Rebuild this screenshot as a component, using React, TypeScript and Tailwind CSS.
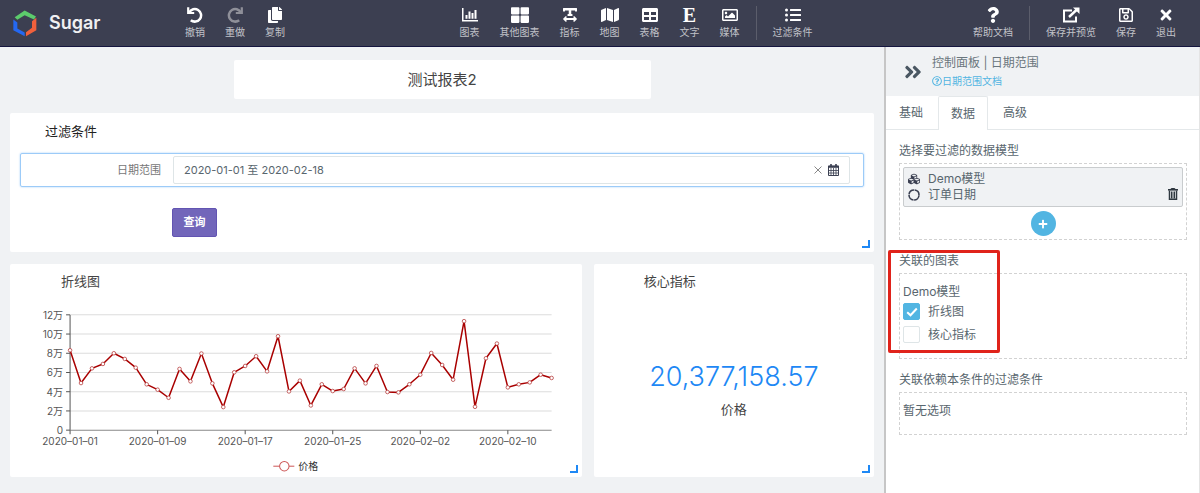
import React, { useState } from 'react';
import {
  FaAngleDoubleRight,
  FaCopy,
  FaCubes,
  FaListUl,
  FaMap,
  FaPlus,
  FaQuestion,
  FaRegImage,
  FaRegQuestionCircle,
  FaRegSave,
  FaTable,
  FaTextWidth,
  FaThLarge,
  FaTimes,
} from 'react-icons/fa';

// prices per day, in units of 10,000
const prices = [
  8.31, 4.9, 6.43, 6.89, 8.0, 7.41, 6.5, 4.77, 4.21, 3.37, 6.37, 5.08, 7.97, 4.87, 2.4, 6.02, 6.68,
  7.69, 6.12, 9.77, 4.03, 5.15, 2.57, 4.77, 4.07, 4.28, 6.43, 4.87, 6.68, 3.97, 3.93, 4.77, 5.77,
  8.03, 6.78, 5.25, 11.34, 2.43, 7.48, 9.01, 4.45, 4.77, 4.97, 5.77, 5.43,
];

const dates = [
  '2020-01-01',
  '2020-01-09',
  '2020-01-17',
  '2020-01-25',
  '2020-02-02',
  '2020-02-10',
];

function Logo() {
  return (
    <svg viewBox="40 28 72 80" className="w-6 h-[27px]" aria-hidden="true">
      <path d="M45 49L75 29L109 47L103 56L75 43L53 57Z" fill="#5ccb6c" />
      <path d="M41 56L53 65V83L75 95V106L41 88Z" fill="#2468f2" />
      <path d="M110 51V88L79 106V94L97 81V61Z" fill="#f0603c" />
    </svg>
  );
}

function UndoIcon() {
  return (
    <svg viewBox="0 0 16 16" className="w-4 h-4" fill="none" stroke="currentColor" aria-hidden="true">
      <path d="M1.2 0.3V6H7.2" strokeWidth="2.2" />
      <path d="M2.2 5.4A6.3 6.3 0 1 1 3.8 13.2" strokeWidth="2.5" />
    </svg>
  );
}

function RedoIcon() {
  return (
    <svg viewBox="0 0 16 16" className="w-4 h-4" fill="none" stroke="currentColor" aria-hidden="true">
      <path d="M14.8 0.3V6H8.8" strokeWidth="2.2" />
      <path d="M13.8 5.4A6.3 6.3 0 1 0 12.2 13.2" strokeWidth="2.5" />
    </svg>
  );
}

function ChartIcon() {
  return (
    <svg viewBox="0 0 16 14" className="w-4 h-[14px]" fill="currentColor" aria-hidden="true">
      <path d="M0 0H1.5V12H16V13.5H0ZM3.5 7H5.5V10.7H3.5ZM6.5 3.5H8.5V10.7H6.5ZM9.5 5H11.5V10.7H9.5ZM12.5 2H14.5V10.7H12.5Z" />
    </svg>
  );
}

function ExternalIcon() {
  return (
    <svg viewBox="0 0 18 16" className="w-[18px] h-4" fill="none" stroke="currentColor" strokeWidth="2" aria-hidden="true">
      <path d="M10 3.5H2V14.5H14V9.5" />
      <path d="M7 10L15 2.5" strokeWidth="2.4" />
      <path d="M11 0.5H17.5V7Z" fill="currentColor" stroke="none" />
    </svg>
  );
}

function CalendarIcon() {
  return (
    <svg viewBox="0 0 11 12" className="w-[11px] h-3" fill="none" stroke="currentColor" aria-hidden="true">
      <path d="M0.5 2H10.5V11.5H0.5Z" />
      <path d="M0 2.8H11" strokeWidth="2" />
      <path d="M3 0V3M8 0V3" strokeWidth="1.6" />
      <path d="M3 4V11M5.5 4V11M8 4V11M1 6.5H10M1 9H10" strokeWidth="0.8" />
    </svg>
  );
}

function TrashIcon() {
  return (
    <svg viewBox="0 0 10 12" className="w-[10px] h-3" fill="none" stroke="currentColor" aria-hidden="true">
      <path d="M0 1.8H10" strokeWidth="1.6" />
      <path d="M3.2 1.5V0.5H6.8V1.5" />
      <path d="M1.5 2.5V11.2H8.5V2.5" strokeWidth="1.5" />
      <path d="M3.5 3.5V10.5M5 3.5V10.5M6.5 3.5V10.5" strokeWidth="1" />
    </svg>
  );
}

function RingIcon() {
  return (
    <svg viewBox="0 0 12 12" className="w-3 h-3" fill="none" stroke="currentColor" strokeWidth="1.6" aria-hidden="true">
      <circle cx="6" cy="6" r="5" strokeDasharray="7.25 0.6" strokeDashoffset="-0.3" />
    </svg>
  );
}

interface ToolProps {
  label: string;
  dim?: boolean;
  children: React.ReactNode;
}

function Tool({ label, dim, children }: ToolProps) {
  return (
    <button className="flex flex-col items-center px-[10px] pt-px whitespace-nowrap">
      <span className={dim ? 'flex items-center h-4 text-base text-[#8f9099]' : 'flex items-center h-4 text-base text-white'}>
        {children}
      </span>
      <span className="mt-px text-[10px] leading-4 text-[#c1c2c8]">{label}</span>
    </button>
  );
}

function Divider() {
  return <div className="w-px h-[34px] mx-[6px] bg-[#5b5d6b]" />;
}

function ResizeHandle() {
  return <div className="absolute right-1 bottom-1 w-2 h-2 border-r-2 border-b-2 border-[#1e88f5]" />;
}

function LineChart() {
  const px = (i: number) => 60 + (i * 481) / 44;
  const py = (v: number) => 133 - v * 9.6;

  return (
    <svg viewBox="0 0 571 180" className="block w-full" role="img" aria-label="折线图">
      {[2, 4, 6, 8, 10, 12].map((v) => (
        <line key={v} x1="60" x2="541" y1={py(v)} y2={py(v)} stroke="#dcdcdc" />
      ))}
      {[0, 2, 4, 6, 8, 10, 12].map((v) => (
        <g key={v}>
          <line x1="56" x2="60" y1={py(v)} y2={py(v)} stroke="#555" />
          <text x="53" y={py(v) + 4} textAnchor="end" fontSize="10" fill="#555">
            {v === 0 ? '0' : `${v}万`}
          </text>
        </g>
      ))}
      <line x1="60" x2="60" y1="18" y2="133" stroke="#555" />
      <line x1="60" x2="541" y1="133" y2="133" stroke="#888" />
      {dates.map((date, i) => (
        <g key={date}>
          <line x1={px(i * 8)} x2={px(i * 8)} y1="133" y2="137" stroke="#555" />
          <text x={px(i * 8)} y="148" textAnchor="middle" fontSize="10" fill="#555">
            {date.replace(/-/g, '–')}
          </text>
        </g>
      ))}
      <polyline
        points={prices.map((v, i) => `${px(i)},${py(v)}`).join(' ')}
        fill="none"
        stroke="#a90000"
        strokeWidth="1.5"
        strokeLinejoin="bevel"
      />
      {prices.map((v, i) => (
        <circle key={i} cx={px(i)} cy={py(v)} r="1.8" fill="#fff" stroke="#b84040" strokeWidth="0.8" />
      ))}
      <line x1="263" x2="284" y1="169" y2="169" stroke="#c55" />
      <circle cx="274" cy="169" r="4.7" fill="#fff" stroke="#c55" />
      <text x="288" y="173" fontSize="10" fill="#333">
        价格
      </text>
    </svg>
  );
}

interface CheckProps {
  label: string;
  checked: boolean;
  onChange: (checked: boolean) => void;
}

function Check({ label, checked, onChange }: CheckProps) {
  return (
    <label className="flex items-center gap-2 h-[23px]">
      <span className="grid place-items-center">
        <input
          type="checkbox"
          checked={checked}
          onChange={(e) => onChange(e.target.checked)}
          className="col-start-1 row-start-1 appearance-none w-[17px] h-[17px] bg-white border border-[#dee5e7] rounded-xs checked:bg-[#52b5e2] checked:border-[#52b5e2]"
        />
        {checked && (
          <svg viewBox="0 0 12 10" className="col-start-1 row-start-1 w-3 h-[10px] pointer-events-none" fill="none" stroke="#fff" strokeWidth="2">
            <path d="M1.2 5.2L4.5 8.3L10.8 1.5" />
          </svg>
        )}
      </span>
      {label}
    </label>
  );
}

export default function App() {
  const [tab, setTab] = useState('数据');
  const [range, setRange] = useState('2020-01-01 至 2020-02-18');
  const [lineLinked, setLineLinked] = useState(true);
  const [metricLinked, setMetricLinked] = useState(false);

  return (
    <div className="flex flex-col min-h-screen bg-[#f0f2f4] text-xs text-[#58666e] font-[Inter,'Noto_Sans_CJK_SC',sans-serif]">
      <header className="flex items-center h-[47px] pr-[14px] bg-[#3c3f51] border-b border-[#15163f]">
        <div className="flex items-center gap-3 w-[175px] pl-[13px]">
          <Logo />
          <span className="text-lg font-semibold text-[#f0f0f2]">Sugar</span>
        </div>
        <div className="flex items-center">
          <Tool label="撤销"><UndoIcon /></Tool>
          <Tool label="重做" dim><RedoIcon /></Tool>
          <Tool label="复制"><FaCopy /></Tool>
        </div>
        <div className="flex items-center mx-auto pl-[14px]">
          <Tool label="图表"><ChartIcon /></Tool>
          <Tool label="其他图表"><FaThLarge className="text-lg" /></Tool>
          <Tool label="指标"><FaTextWidth /></Tool>
          <Tool label="地图"><FaMap className="text-lg" /></Tool>
          <Tool label="表格"><FaTable /></Tool>
          <Tool label="文字">
            <span className="text-xl leading-4 font-bold font-['Liberation_Serif',serif]">E</span>
          </Tool>
          <Tool label="媒体"><FaRegImage /></Tool>
          <Divider />
          <Tool label="过滤条件"><FaListUl /></Tool>
        </div>
        <div className="flex items-center">
          <Tool label="帮助文档"><FaQuestion /></Tool>
          <Divider />
          <Tool label="保存并预览"><ExternalIcon /></Tool>
          <Tool label="保存"><FaRegSave /></Tool>
          <Tool label="退出"><FaTimes /></Tool>
        </div>
      </header>

      <div className="flex flex-1">
        <main className="flex-1 min-w-0 pl-[10px] pr-[10px] pt-[13px] pb-4">
          <h1 className="w-[417px] mx-auto py-2 text-center text-[15px] leading-[23px] text-[#444] bg-white rounded-xs">
            测试报表2
          </h1>

          <section className="relative mt-[14px] h-[139px] px-[10px] pt-2 bg-white rounded-xs">
            <h2 className="pl-[25px] text-[13px] leading-5 text-[#222]">过滤条件</h2>
            <div className="flex items-center mt-3 h-[34px] pr-[13px] border border-[#9ccbf8] rounded-xs shadow-[0_0_2px_#9ccbf8]">
              <label htmlFor="range" className="w-[152px] pr-3 text-right text-[11px] text-[#777]">
                日期范围
              </label>
              <div className="flex flex-1 items-center gap-[6px] h-7 px-[10px] border border-[#dee5e7] rounded-xs">
                <input
                  id="range"
                  value={range}
                  onChange={(e) => setRange(e.target.value)}
                  className="flex-1 min-w-0 text-[11px] outline-none"
                />
                <button aria-label="清除" onClick={() => setRange('')} className="text-[#888]">
                  <svg viewBox="0 0 8 8" className="w-2 h-2" stroke="currentColor" fill="none">
                    <path d="M0.5 0.5L7.5 7.5M7.5 0.5L0.5 7.5" />
                  </svg>
                </button>
                <span className="text-[#3a3f51]"><CalendarIcon /></span>
              </div>
            </div>
            <button className="mt-[21px] ml-[152px] w-[45px] h-[29px] text-[11px] font-semibold text-white bg-[#7266ba] border border-[#6254b2] rounded-xs">
              查询
            </button>
            <ResizeHandle />
          </section>

          <div className="grid grid-cols-[571fr_280fr] gap-3 mt-3">
            <section className="relative h-[213px] pt-[7px] bg-white rounded-xs">
              <h2 className="pl-[51px] mb-[6px] text-[13px] leading-5 text-[#444]">折线图</h2>
              <LineChart />
              <ResizeHandle />
            </section>
            <section className="relative pt-[7px] bg-white rounded-xs">
              <h2 className="pl-[50px] text-[13px] leading-5 text-[#444]">核心指标</h2>
              <div className="mt-[68px] text-center">
                <div className="text-[27px] leading-9 font-light text-[#1e88f5]">20,377,158.57</div>
                <div className="mt-1 text-[13px] leading-5 text-[#444]">价格</div>
              </div>
              <ResizeHandle />
            </section>
          </div>
        </main>

        <aside className="w-[316px] shrink-0 bg-white border-l-2 border-l-[#c6c6c6] border-r border-r-[#e4e4e4]">
          <div className="flex items-center gap-2 h-[49px] pl-[17px] bg-[#f0f2f4]">
            <button aria-label="收起" className="w-5 text-[20px] text-[#4a5762]">
              <FaAngleDoubleRight />
            </button>
            <div className="pl-px pt-px">
              <div className="leading-[18px] text-[#6a767d]">控制面板 | 日期范围</div>
              <a href="#doc" className="flex items-center text-[10px] leading-[18px] text-[#52b5e2]">
                <FaRegQuestionCircle className="text-[10px]" />
                日期范围文档
              </a>
            </div>
          </div>

          <div className="flex h-[34px] border-b border-[#e4e8ea]">
            {['基础', '数据', '高级'].map((name) => (
              <button
                key={name}
                onClick={() => setTab(name)}
                className={
                  tab === name
                    ? 'px-3 h-[34px] bg-white border-x border-t border-[#e4e8ea] rounded-t-xs'
                    : 'pl-[13px] pr-[14px] h-[34px] first:pr-[15px] last:pl-[15px]'
                }
              >
                {name}
              </button>
            ))}
          </div>

          <div className="flex flex-col gap-3 px-3 pt-3 pl-[13px]">
            <section>
              <h3 className="leading-[18px]">选择要过滤的数据模型</h3>
              <div className="mt-[3px] p-[3px] h-[77px] border border-dashed border-[#d2d2d2]">
                <div className="flex items-end justify-between h-10 px-1 py-[3px] bg-[#f0f2f4] border border-[#c9ccce] rounded-xs">
                  <div>
                    <div className="flex items-center gap-2 leading-4">
                      <FaCubes className="w-3 text-[#3a3f51]" />
                      Demo模型
                    </div>
                    <div className="flex items-center gap-2 leading-4">
                      <span className="text-[#3a3f51]"><RingIcon /></span>
                      订单日期
                    </div>
                  </div>
                  <button aria-label="删除" className="mb-[3px] text-[#2f3840]">
                    <TrashIcon />
                  </button>
                </div>
                <button
                  aria-label="添加"
                  className="flex items-center justify-center mx-auto mt-1 w-[25px] h-[25px] text-[10px] text-white bg-[#52b5e2] rounded-full"
                >
                  <FaPlus />
                </button>
              </div>
            </section>

            <section className="relative">
              <h3 className="leading-[18px]">关联的图表</h3>
              <div className="mt-[3px] pl-[3px] pt-[10px] h-[86px] border border-dashed border-[#d2d2d2]">
                <div className="leading-4">Demo模型</div>
                <Check label="折线图" checked={lineLinked} onChange={setLineLinked} />
                <Check label="核心指标" checked={metricLinked} onChange={setMetricLinked} />
              </div>
              <div className="absolute -left-[11px] -top-[2px] w-[112px] h-[103px] border-3 border-[#e0231b] rounded-xs pointer-events-none" />
            </section>

            <section>
              <h3 className="leading-[18px]">关联依赖本条件的过滤条件</h3>
              <div className="mt-[3px] pl-[3px] pt-[9px] h-[43px] leading-[18px] border border-dashed border-[#d2d2d2]">
                暂无选项
              </div>
            </section>
          </div>
        </aside>
      </div>
    </div>
  );
}
